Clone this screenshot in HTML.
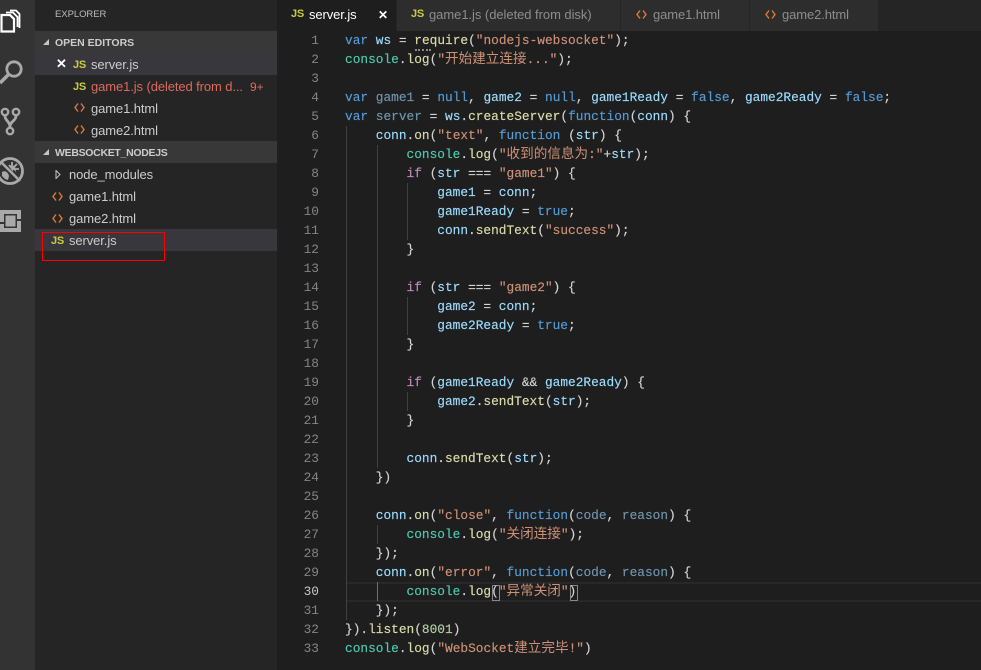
<!DOCTYPE html>
<html><head><meta charset="utf-8"><style>
html,body{margin:0;padding:0;width:981px;height:670px;overflow:hidden;background:#1e1e1e}
.a{position:absolute}
#act{left:0;top:0;width:35px;height:670px;background:#333}
#side{left:35px;top:0;width:242px;height:670px;background:#252526}
.t{position:absolute;font-family:"Liberation Sans",sans-serif;font-size:13px;line-height:24px;height:22px;white-space:nowrap;color:#ccc;letter-spacing:-.1px}
.hd{position:absolute;left:35px;width:242px;height:22px;background:#383838}
.b{font-size:10.5px;font-weight:bold;color:#ccc;letter-spacing:0}
.js{position:absolute;font:bold 11px/12px "Liberation Sans",sans-serif;color:#cbcb41;letter-spacing:-.2px}
.h{position:absolute;width:11px;height:9px;fill:none;stroke:#e37933;stroke-width:1.4}
#tabs{left:280px;top:0;width:701px;height:31px;background:#252526}
.l{position:absolute;left:345px;height:19px;line-height:19px;font-family:"Liberation Mono",monospace;font-size:12.82px;color:#d4d4d4;white-space:pre;-webkit-text-stroke:.15px}
.n{position:absolute;left:290px;width:29px;text-align:right;height:19px;line-height:19px;font-family:"Liberation Mono",monospace;font-size:12.82px;color:#858585}
.k{color:#569cd6}.v{color:#9cdcfe}.f{color:#dcdcaa}.s{color:#ce9178}.c{color:#4ec9b0}.u{color:#6f95ad}.m{color:#b5cea8}.o{color:#c586c0}
.z{font-family:"Noto Sans CJK SC",sans-serif;font-size:13.6px;line-height:0;-webkit-text-stroke:0}
.g{position:absolute;width:1px;background:#404040}
</style></head><body>
<div class="a" id="act"></div>
<svg class="a" style="left:0;top:0" width="35" height="240" fill="none">
<path d="M1.500 15h8.500l4 4v12.500H1.500z" stroke="#fff" stroke-width="2.200"/>
<path d="M6 12.500h7l4.500 4.500v10" stroke="#fff" stroke-width="1.800"/>
<path d="M10 10.500h6l3.500 3.500v14" stroke="#fff" stroke-width="1.800"/>
<circle cx="14" cy="69" r="7.200" stroke="#a9a9a9" stroke-width="2.800"/>
<path d="M8 75L0 83" stroke="#a9a9a9" stroke-width="3.600"/>
<circle cx="5" cy="112" r="3.200" stroke="#a9a9a9" stroke-width="2.400"/><circle cx="16" cy="112" r="3.200" stroke="#a9a9a9" stroke-width="2.400"/><circle cx="10" cy="131" r="3.200" stroke="#a9a9a9" stroke-width="2.400"/>
<path d="M5 116c0 5 5 5 5 11M16 116c0 5-6 5-6 11" stroke="#a9a9a9" stroke-width="2.800"/>
<circle cx="10" cy="171" r="12.500" stroke="#a9a9a9" stroke-width="2.800"/>
<path d="M1 162L20 181" stroke="#a9a9a9" stroke-width="2.600"/>
<path d="M2 172c3-2 6 0 7 4l-1 4-3-1-3-3z" fill="#a9a9a9"/>
<path d="M9 165l3 4 0-7M12 169l5-5M12 169l7 0" stroke="#a9a9a9" stroke-width="1.800"/>
<path d="M9 165l6 1 1 6z" fill="#a9a9a9"/>
<rect x="0" y="210" width="21" height="22" fill="#a9a9a9"/>
<rect x="4" y="214" width="13" height="14" fill="#333"/>
<rect x="5.500" y="215.500" width="10" height="11" fill="#a9a9a9"/>
<rect x="17" y="219" width="4" height="2" fill="#333"/>
<rect x="0" y="222" width="4" height="2" fill="#333"/>
</svg>

<div class="a" id="side"></div>
<div class="t" style="left:55px;top:3px;font-size:9.500px;color:#bbb;letter-spacing:-.05px">EXPLORER</div>
<div class="hd" style="top:31px"></div>
<div class="t b" style="left:55px;top:31px">OPEN EDITORS</div>
<svg class="a" style="left:43px;top:38px" width="8" height="8"><path d="M6 1v6H0z" fill="#c5c5c5"/></svg>
<div class="a" style="left:35px;top:53px;width:242px;height:22px;background:#37373d"></div>
<div class="t" style="left:56px;top:53px;color:#fff;font:bold 13px/22px 'Liberation Sans',sans-serif">✕</div>
<div class="js" style="left:73px;top:59px">JS</div><div class="t" style="left:91px;top:53px">server.js</div>
<div class="js" style="left:73px;top:81px">JS</div><div class="t" style="left:91px;top:75px;color:#dd6a5e">game1.js (deleted from d...</div><div class="t" style="left:250px;top:75px;color:#dd6a5e;font-size:12px">9+</div>
<svg class="h" style="left:74px;top:103px"><path d="M4 .5L1 4.500L4 8.500M7 .5L10 4.500L7 8.500"/></svg><div class="t" style="left:91px;top:97px">game1.html</div>
<svg class="h" style="left:74px;top:125px"><path d="M4 .5L1 4.500L4 8.500M7 .5L10 4.500L7 8.500"/></svg><div class="t" style="left:91px;top:119px">game2.html</div>
<div class="hd" style="top:141px"></div>
<div class="t b" style="left:55px;top:141px;letter-spacing:-.3px">WEBSOCKET_NODEJS</div>
<svg class="a" style="left:43px;top:148px" width="8" height="8"><path d="M6 1v6H0z" fill="#c5c5c5"/></svg>
<svg class="a" style="left:55px;top:170px" width="6" height="9"><path d="M1 .5l4 4-4 4z" fill="none" stroke="#c5c5c5"/></svg>
<div class="t" style="left:69px;top:163px">node_modules</div>
<svg class="h" style="left:52px;top:192px"><path d="M4 .5L1 4.500L4 8.500M7 .5L10 4.500L7 8.500"/></svg><div class="t" style="left:69px;top:185px">game1.html</div>
<svg class="h" style="left:52px;top:214px"><path d="M4 .5L1 4.500L4 8.500M7 .5L10 4.500L7 8.500"/></svg><div class="t" style="left:69px;top:207px">game2.html</div>
<div class="a" style="left:35px;top:229px;width:242px;height:22px;background:#37373d"></div>
<div class="js" style="left:51px;top:235px">JS</div><div class="t" style="left:69px;top:229px">server.js</div>
<div class="a" style="left:42px;top:232px;width:121px;height:27px;border:1px solid #f00"></div>

<div class="a" id="tabs"></div>
<div class="a" style="left:280px;top:0;width:116px;height:31px;background:#1e1e1e"></div>
<div class="a" style="left:397px;top:0;width:223px;height:31px;background:#2d2d2d"></div>
<div class="a" style="left:621px;top:0;width:128px;height:31px;background:#2d2d2d"></div>
<div class="a" style="left:750px;top:0;width:128px;height:31px;background:#2d2d2d"></div>
<div class="js" style="left:291px;top:8px">JS</div><div class="t" style="left:309px;top:3px;color:#fff">server.js</div>
<div class="t" style="left:378px;top:3px;color:#fff;font-weight:bold;font-size:12px">✕</div>
<div class="js" style="left:411px;top:8px">JS</div><div class="t" style="left:429px;top:3px;color:#8d8d8d;letter-spacing:-.05px">game1.js (deleted from disk)</div>
<svg class="h" style="left:636px;top:10px"><path d="M4 .5L1 4.500L4 8.500M7 .5L10 4.500L7 8.500"/></svg><div class="t" style="left:653px;top:3px;color:#8d8d8d">game1.html</div>
<svg class="h" style="left:765px;top:10px"><path d="M4 .5L1 4.500L4 8.500M7 .5L10 4.500L7 8.500"/></svg><div class="t" style="left:782px;top:3px;color:#8d8d8d">game2.html</div>

<div class="a" style="left:346px;top:582px;width:635px;height:16px;border-top:2px solid #282828;border-bottom:2px solid #282828"></div>
<div class="g" style="left:346px;top:126px;height:494px"></div>
<div class="g" style="left:377px;top:145px;height:323px"></div>
<div class="g" style="left:377px;top:525px;height:19px"></div>
<div class="g" style="left:377px;top:582px;height:19px;background:#707070"></div>
<div class="g" style="left:407px;top:183px;height:57px"></div>
<div class="g" style="left:407px;top:297px;height:38px"></div>
<div class="g" style="left:407px;top:392px;height:19px"></div>
<div class="a" style="left:492px;top:585px;width:6px;height:14px;border:1px solid #888"></div>
<div class="a" style="left:570px;top:585px;width:6px;height:14px;border:1px solid #888"></div>
<div class="a" style="left:415px;top:47px;width:16px;height:2px;border-bottom:2px dotted #888"></div>

<div class="n" style="top:31px">1</div><div class="n" style="top:50px">2</div><div class="n" style="top:69px">3</div><div class="n" style="top:88px">4</div><div class="n" style="top:107px">5</div><div class="n" style="top:126px">6</div><div class="n" style="top:145px">7</div><div class="n" style="top:164px">8</div><div class="n" style="top:183px">9</div><div class="n" style="top:202px">10</div><div class="n" style="top:221px">11</div><div class="n" style="top:240px">12</div><div class="n" style="top:259px">13</div><div class="n" style="top:278px">14</div><div class="n" style="top:297px">15</div><div class="n" style="top:316px">16</div><div class="n" style="top:335px">17</div><div class="n" style="top:354px">18</div><div class="n" style="top:373px">19</div><div class="n" style="top:392px">20</div><div class="n" style="top:411px">21</div><div class="n" style="top:430px">22</div><div class="n" style="top:449px">23</div><div class="n" style="top:468px">24</div><div class="n" style="top:487px">25</div><div class="n" style="top:506px">26</div><div class="n" style="top:525px">27</div><div class="n" style="top:544px">28</div><div class="n" style="top:563px">29</div><div class="n" style="top:582px;color:#c6c6c6">30</div><div class="n" style="top:601px">31</div><div class="n" style="top:620px">32</div><div class="n" style="top:639px">33</div>

<div class="l" style="top:31px"><span class="k">var</span> <span class="v">ws</span> = <span class="f">require</span>(<span class="s">"nodejs-websocket"</span>);</div>
<div class="l" style="top:50px"><span class="c">console</span>.<span class="f">log</span>(<span class="s">"<span class="z">开始建立连接</span>..."</span>);</div>
<div class="l" style="top:88px"><span class="k">var</span> <span class="u">game1</span> = <span class="k">null</span>, <span class="v">game2</span> = <span class="k">null</span>, <span class="v">game1Ready</span> = <span class="k">false</span>, <span class="v">game2Ready</span> = <span class="k">false</span>;</div>
<div class="l" style="top:107px"><span class="k">var</span> <span class="u">server</span> = <span class="v">ws</span>.<span class="f">createServer</span>(<span class="k">function</span>(<span class="v">conn</span>) {</div>
<div class="l" style="top:126px">    <span class="v">conn</span>.<span class="f">on</span>(<span class="s">"text"</span>, <span class="k">function</span> (<span class="v">str</span>) {</div>
<div class="l" style="top:145px">        <span class="c">console</span>.<span class="f">log</span>(<span class="s">"<span class="z">收到的信息为</span>:"</span>+<span class="v">str</span>);</div>
<div class="l" style="top:164px">        <span class="o">if</span> (<span class="v">str</span> === <span class="s">"game1"</span>) {</div>
<div class="l" style="top:183px">            <span class="v">game1</span> = <span class="v">conn</span>;</div>
<div class="l" style="top:202px">            <span class="v">game1Ready</span> = <span class="k">true</span>;</div>
<div class="l" style="top:221px">            <span class="v">conn</span>.<span class="f">sendText</span>(<span class="s">"success"</span>);</div>
<div class="l" style="top:240px">        }</div>
<div class="l" style="top:278px">        <span class="o">if</span> (<span class="v">str</span> === <span class="s">"game2"</span>) {</div>
<div class="l" style="top:297px">            <span class="v">game2</span> = <span class="v">conn</span>;</div>
<div class="l" style="top:316px">            <span class="v">game2Ready</span> = <span class="k">true</span>;</div>
<div class="l" style="top:335px">        }</div>
<div class="l" style="top:373px">        <span class="o">if</span> (<span class="v">game1Ready</span> &amp;&amp; <span class="v">game2Ready</span>) {</div>
<div class="l" style="top:392px">            <span class="v">game2</span>.<span class="f">sendText</span>(<span class="v">str</span>);</div>
<div class="l" style="top:411px">        }</div>
<div class="l" style="top:449px">        <span class="v">conn</span>.<span class="f">sendText</span>(<span class="v">str</span>);</div>
<div class="l" style="top:468px">    })</div>
<div class="l" style="top:506px">    <span class="v">conn</span>.<span class="f">on</span>(<span class="s">"close"</span>, <span class="k">function</span>(<span class="u">code</span>, <span class="u">reason</span>) {</div>
<div class="l" style="top:525px">        <span class="c">console</span>.<span class="f">log</span>(<span class="s">"<span class="z">关闭连接</span>"</span>);</div>
<div class="l" style="top:544px">    });</div>
<div class="l" style="top:563px">    <span class="v">conn</span>.<span class="f">on</span>(<span class="s">"error"</span>, <span class="k">function</span>(<span class="u">code</span>, <span class="u">reason</span>) {</div>
<div class="l" style="top:582px">        <span class="c">console</span>.<span class="f">log</span>(<span class="s">"<span class="z">异常关闭</span>"</span>)</div>
<div class="l" style="top:601px">    });</div>
<div class="l" style="top:620px">}).<span class="f">listen</span>(<span class="m">8001</span>)</div>
<div class="l" style="top:639px"><span class="c">console</span>.<span class="f">log</span>(<span class="s">"WebSocket<span class="z">建立完毕</span>!"</span>)</div>
</body></html>
